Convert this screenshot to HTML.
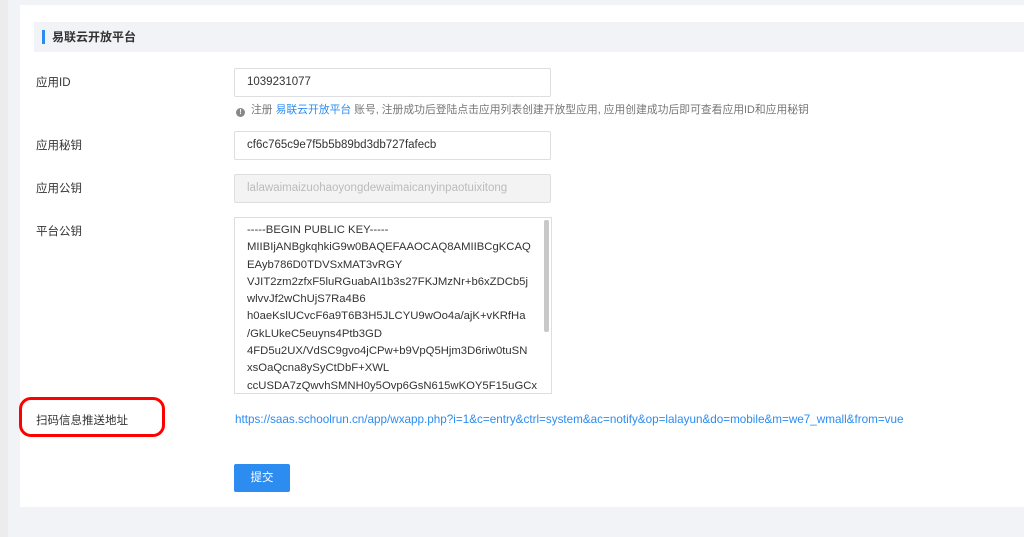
<!DOCTYPE html>
<html><head><meta charset="utf-8"><style>
*{margin:0;padding:0;box-sizing:border-box}
body{width:1024px;height:537px;overflow:hidden;background:#f2f3f7;font-family:"Liberation Sans","Noto Sans CJK SC",sans-serif;position:relative;color:#333}
.strip{position:absolute;left:0;top:0;width:8px;height:537px;background:#ececec}
.card{position:absolute;left:20px;top:5px;width:1004px;height:502px;background:#fff}
.hdr{position:absolute;left:34px;top:22px;width:990px;height:30px;background:#f2f3f7}
.hdr i{position:absolute;left:8px;top:8px;width:3px;height:14px;background:#2d8cf0}
.hdr span{position:absolute;left:18px;top:6px;font-size:12px;font-weight:bold;color:#333}
.lbl{position:absolute;left:36px;font-size:11.5px;color:#333}
.inp{position:absolute;left:234px;width:317px;height:29px;border:1px solid #dcdee2;border-radius:2px;font-size:11.5px;padding:7px 12px;color:#333;background:#fff}
.dis{background:#f3f3f3;color:#bbb}
.ta{position:absolute;left:234px;top:217px;width:318px;height:177px;border:1px solid #dcdee2;font-size:11.3px;line-height:17.3px;padding:4px 12px;color:#333;overflow:hidden;white-space:nowrap}
.sb{position:absolute;right:2px;top:2px;width:5px;height:112px;background:#c8c8c8;border-radius:2px}
.tip{position:absolute;left:236px;top:101px;font-size:10.8px;color:#777;white-space:nowrap}
.tip b{display:inline-block;width:9px;height:9px;border-radius:50%;background:#888;color:#fff;font-size:7px;text-align:center;line-height:9px;font-weight:bold;vertical-align:-1px;margin-right:6px}
a{color:#2d8cf0;text-decoration:none}
.red{position:absolute;left:19px;top:397px;width:146px;height:40px;border:3px solid #f00;border-radius:12px}
.btn{position:absolute;left:234px;top:464px;width:56px;height:28px;background:#2d8cf0;color:#fff;border-radius:2px;font-size:11.5px;text-align:center;line-height:28px}
</style></head><body>
<div class="strip"></div>
<div class="card"></div>
<div class="hdr"><i></i><span>易联云开放平台</span></div>
<div class="lbl" style="top:74px">应用ID</div>
<div class="inp" style="top:68px">1039231077</div>
<div class="tip"><b>!</b>注册 <a>易联云开放平台</a> 账号, 注册成功后登陆点击应用列表创建开放型应用, 应用创建成功后即可查看应用ID和应用秘钥</div>
<div class="lbl" style="top:137px">应用秘钥</div>
<div class="inp" style="top:131px">cf6c765c9e7f5b5b89bd3db727fafecb</div>
<div class="lbl" style="top:180px">应用公钥</div>
<div class="inp dis" style="top:174px">lalawaimaizuohaoyongdewaimaicanyinpaotuixitong</div>
<div class="lbl" style="top:223px">平台公钥</div>
<div class="ta">-----BEGIN PUBLIC KEY-----<br>MIIBIjANBgkqhkiG9w0BAQEFAAOCAQ8AMIIBCgKCAQ<br>EAyb786D0TDVSxMAT3vRGY<br>VJIT2zm2zfxF5luRGuabAI1b3s27FKJMzNr+b6xZDCb5j<br>wlvvJf2wChUjS7Ra4B6<br>h0aeKslUCvcF6a9T6B3H5JLCYU9wOo4a/ajK+vKRfHa<br>/GkLUkeC5euyns4Ptb3GD<br>4FD5u2UX/VdSC9gvo4jCPw+b9VpQ5Hjm3D6riw0tuSN<br>xsOaQcna8ySyCtDbF+XWL<br>ccUSDA7zQwvhSMNH0y5Ovp6GsN615wKOY5F15uGCx<div class="sb"></div></div>
<div class="lbl" style="top:412px">扫码信息推送地址</div>
<div class="red"></div>
<div style="position:absolute;left:235px;top:413px;font-size:11.7px;white-space:nowrap"><a>https://saas.schoolrun.cn/app/wxapp.php?i=1&amp;c=entry&amp;ctrl=system&amp;ac=notify&amp;op=lalayun&amp;do=mobile&amp;m=we7_wmall&amp;from=vue</a></div>
<div class="btn">提交</div>
</body></html>
